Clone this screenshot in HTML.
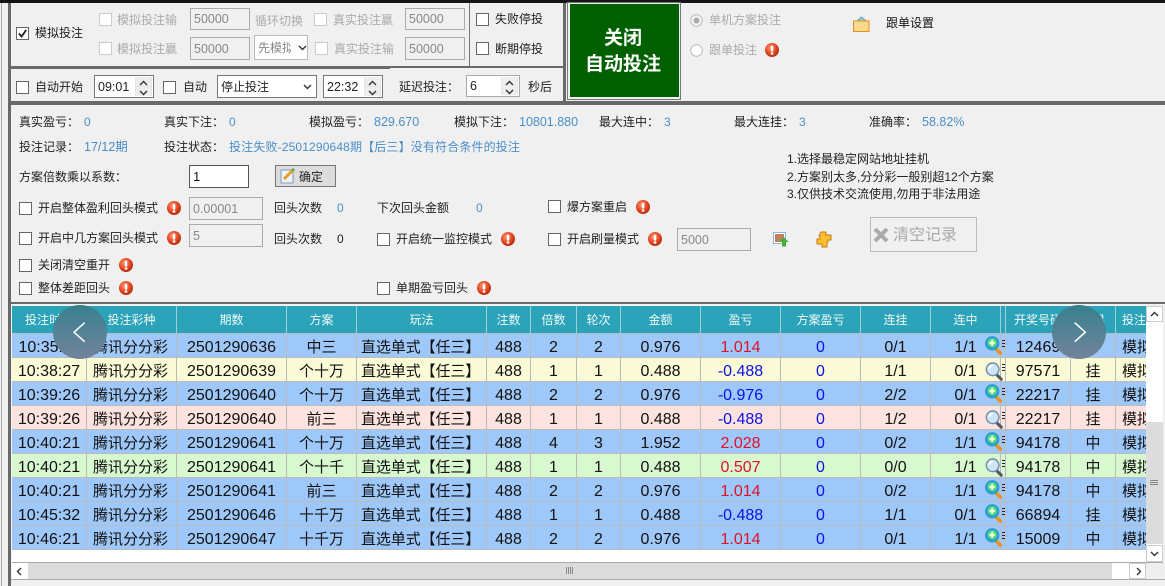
<!DOCTYPE html>
<html lang="zh"><head><meta charset="utf-8"><title>投注</title>
<style>
html,body{margin:0;padding:0}
body{width:1165px;height:586px;position:relative;overflow:hidden;background:#f0f0f0;font-family:"Liberation Sans","Noto Sans CJK SC",sans-serif;font-size:12px;color:#111}
.r{position:absolute}
.t{position:absolute;white-space:nowrap;line-height:16px;font-size:12px;color:#222}
.g{color:#aaa}.b{color:#4a8ec8}
.c{position:absolute;width:11px;height:11px;background:#fff;border:1px solid #666}
.d{border-color:#ccc}
.i{position:absolute;box-sizing:border-box;border:1px solid #aaa;background:#f0f0f0;color:#888;font-size:12.5px;padding-left:3px;display:flex;align-items:center}
.k{border:1px solid #777;background:#fff;color:#222}
.sp{position:absolute;top:1px;right:1px;width:17px;bottom:1px;background:#e4e4e4}
.sp i{position:absolute;left:1px;width:15px;height:9px;background:#eee;border:0 solid #ccc}
.sp svg{position:absolute;left:4px;top:2px}
table{position:absolute;left:12px;top:306px;border-collapse:separate;border-spacing:0;table-layout:fixed;width:1168px}
th{height:27px;background:#2ba3b8;font-weight:400;font-size:12px;border-right:1px solid #9fcfd8;border-bottom:1px solid #bbb;padding:0;white-space:nowrap;overflow:hidden;color:#f2fafa}
td{height:19px;padding:4px 0 0;border-right:1px solid #bbb;border-bottom:1px solid #bbb;text-align:center;font-size:15px;white-space:nowrap;overflow:visible;position:relative;color:#111;line-height:19px}
td.n{font-size:16px}
td.l{text-align:left;padding-left:6px}
td.f{text-align:left;padding-left:4px;font-size:15px;letter-spacing:-.1px}
tr.u td{background:#9fc8fa}tr.y td{background:#fbfad6}tr.p td{background:#fde3df}tr.v td{background:#d8f9cf}
.red{color:#e0102a!important}.blu{color:#0a10e8!important}
td svg{position:absolute;left:54px;top:2px;z-index:2;width:18px;height:20px}
td svg.s{top:4px}
.o{overflow:hidden!important}
td u{position:absolute;left:1px;top:6px;width:3px;height:9px;background:repeating-linear-gradient(#222 0 1px,transparent 1px 3px)}
.circ{position:absolute;top:305px;width:54px;height:54px;border-radius:50%;background:linear-gradient(#37808e,#72839b)}
</style></head><body>
<svg width="0" height="0" style="position:absolute"><defs>
<radialGradient id="rg" cx=".4" cy=".35" r=".7"><stop offset="0" stop-color="#fb9a74"/><stop offset=".6" stop-color="#e2431f"/><stop offset="1" stop-color="#a92c10"/></radialGradient>
<symbol id="w" viewBox="0 0 14 14"><circle cx="7" cy="7" r="7" fill="url(#rg)"/><rect x="5.8" y="2.6" width="2.5" height="6" rx="1" fill="#fff"/><rect x="5.8" y="9.4" width="2.5" height="2.2" fill="#fff"/></symbol>
<symbol id="pl" viewBox="0 0 20 22"><path d="M11 13l6 6" stroke="#e8961e" stroke-width="4" stroke-linecap="round"/><circle cx="8" cy="8" r="8" fill="#2a9fd0"/><circle cx="8" cy="7.500" r="5" fill="#62e070"/><path d="M8 4.500v6M5 7.500h6" stroke="#fff" stroke-width="2"/></symbol>
<symbol id="se" viewBox="0 0 20 22"><path d="M12 13l6 6" stroke="#556" stroke-width="3.4" stroke-linecap="round"/><circle cx="8.500" cy="8" r="7" fill="#cfe4f5" stroke="#6f8fb0" stroke-width="1.6"/><path d="M4.500 8a4 4 0 0 1 4-4" stroke="#fff" stroke-width="2" fill="none"/></symbol>
<symbol id="up" viewBox="0 0 9 6"><path d="M1 5l3.500-3.500L8 5" stroke="#333" stroke-width="1.4" fill="none"/></symbol>
<symbol id="dn" viewBox="0 0 9 6"><path d="M1 1l3.500 3.500L8 1" stroke="#333" stroke-width="1.4" fill="none"/></symbol>
</defs></svg>

<!-- frame -->
<div class="r" style="left:0;top:0;width:1165px;height:3px;background:#141414"></div>
<div class="r" style="left:1px;top:3px;width:1px;height:583px;background:#aaa"></div>
<div class="r" style="left:8px;top:3px;width:3px;height:583px;background:#696969"></div>
<div class="r" style="left:11px;top:66px;width:379px;height:3px;background:#696969"></div>
<div class="r" style="left:390px;top:66px;width:173px;height:2px;background:#696969"></div>
<div class="r" style="left:11px;top:101px;width:1154px;height:4px;background:#696969"></div>
<div class="r" style="left:469px;top:3px;width:1px;height:63px;background:#777"></div>
<div class="r" style="left:563px;top:3px;width:3px;height:98px;background:#696969"></div>
<div class="r" style="left:11px;top:302px;width:1154px;height:2px;background:#696969"></div>
<div class="r" style="left:12px;top:550px;width:1134px;height:12px;background:#fff"></div>

<!-- top row -->
<div class="c" style="left:16px;top:27px"><svg width="11" height="11" style="display:block"><path d="M2 5.500l2.600 3L9.200 2" stroke="#222" stroke-width="1.8" fill="none"/></svg></div>
<div class="t" style="left:35px;top:25px">模拟投注</div>
<div class="c d" style="left:99px;top:13px"></div><div class="t g" style="left:117px;top:12px">模拟投注输</div>
<div class="i" style="left:190px;top:8px;width:60px;height:22px">50000</div>
<div class="t g" style="left:255px;top:13px">循环切换</div>
<div class="c d" style="left:314px;top:13px"></div><div class="t g" style="left:333px;top:12px">真实投注赢</div>
<div class="i" style="left:405px;top:8px;width:60px;height:22px">50000</div>
<div class="c d" style="left:99px;top:42px"></div><div class="t g" style="left:117px;top:41px">模拟投注赢</div>
<div class="i" style="left:190px;top:37px;width:60px;height:23px">50000</div>
<div class="i" style="left:254px;top:35px;width:54px;height:25px;background:#fff;border-color:#bbb;overflow:hidden;font-size:12px;white-space:nowrap"><span style="width:33px;overflow:hidden;flex:none">先模拟后</span><svg width="9" height="6" style="margin-left:7px;flex:none"><use href="#dn"/></svg></div>
<div class="c d" style="left:315px;top:42px"></div><div class="t g" style="left:334px;top:41px">真实投注输</div>
<div class="i" style="left:405px;top:37px;width:60px;height:23px">50000</div>
<div class="c" style="left:476px;top:13px"></div><div class="t" style="left:495px;top:11px">失败停投</div>
<div class="c" style="left:476px;top:42px"></div><div class="t" style="left:495px;top:41px">断期停投</div>

<!-- second row -->
<div class="c" style="left:16px;top:81px"></div><div class="t" style="left:35px;top:79px">自动开始</div>
<div class="i k" style="left:94px;top:75px;width:60px;height:23px">09:01<div class="sp"><i style="top:0;height:9px"></i><i style="bottom:0;height:9px"></i><svg width="9" height="6" style="top:3px"><use href="#up"/></svg><svg width="9" height="6" style="top:13px"><use href="#dn"/></svg></div></div>
<div class="c" style="left:163px;top:81px"></div><div class="t" style="left:183px;top:79px">自动</div>
<div class="i k" style="left:217px;top:75px;width:100px;height:23px;font-size:12px">停止投注<svg width="9" height="6" style="position:absolute;left:85px;top:8px"><use href="#dn"/></svg></div>
<div class="i k" style="left:323px;top:75px;width:60px;height:23px">22:32<div class="sp"><i style="top:0;height:9px"></i><i style="bottom:0;height:9px"></i><svg width="9" height="6" style="top:3px"><use href="#up"/></svg><svg width="9" height="6" style="top:13px"><use href="#dn"/></svg></div></div>
<div class="t" style="left:399px;top:79px">延迟投注：</div>
<div class="i" style="left:466px;top:75px;width:54px;height:22px;background:#fff;border-color:#aaa;color:#222">6<div class="sp"><i style="top:0;height:9px"></i><i style="bottom:0;height:9px"></i><svg width="9" height="6" style="top:3px"><use href="#up"/></svg><svg width="9" height="6" style="top:12px"><use href="#dn"/></svg></div></div>
<div class="t" style="left:528px;top:79px">秒后</div>

<!-- green button -->
<div class="r" style="left:567px;top:2px;width:114px;height:98px;box-sizing:border-box;border:1px solid #777;background:#f0f0f0"></div>
<div class="r" style="left:570px;top:4px;width:109px;height:93px;background:#006000;color:#fff;font-size:19px;font-weight:700;line-height:26px;text-align:center;display:flex;align-items:center;justify-content:center"><div style="margin-top:3px;margin-left:-3px">关闭<br>自动投注</div></div>

<!-- right panel -->
<svg class="r" style="left:690px;top:14px" width="13" height="13"><circle cx="6.500" cy="6.500" r="5.800" fill="#f4f4f4" stroke="#bbb"/><circle cx="6.500" cy="6.500" r="3" fill="#aaa"/></svg>
<div class="t g" style="left:709px;top:12px">单机方案投注</div>
<svg class="r" style="left:690px;top:44px" width="13" height="13"><circle cx="6.500" cy="6.500" r="5.800" fill="#fff" stroke="#bbb"/></svg>
<div class="t g" style="left:709px;top:42px">跟单投注</div>
<svg class="r" style="left:765px;top:43px" width="14" height="14"><use href="#w"/></svg>
<svg class="r" style="left:853px;top:16px" width="17" height="16"><path d="M4 5l4.500-4 4.500 4z" fill="#8fd0e0" stroke="#79a"/><rect x=".5" y="5" width="15.500" height="10.500" fill="#fbd98a" stroke="#e09020"/></svg>
<div class="t" style="left:886px;top:15px;color:#111">跟单设置</div>

<!-- stats -->
<div class="t" style="left:19px;top:114px">真实盈亏：</div><div class="t b" style="left:84px;top:114px">0</div>
<div class="t" style="left:164px;top:114px">真实下注：</div><div class="t b" style="left:229px;top:114px">0</div>
<div class="t" style="left:309px;top:114px">模拟盈亏：</div><div class="t b" style="left:374px;top:114px;font-size:12.5px">829.670</div>
<div class="t" style="left:454px;top:114px">模拟下注：</div><div class="t b" style="left:519px;top:114px;font-size:12.5px">10801.880</div>
<div class="t" style="left:599px;top:114px">最大连中：</div><div class="t b" style="left:664px;top:114px">3</div>
<div class="t" style="left:734px;top:114px">最大连挂：</div><div class="t b" style="left:799px;top:114px">3</div>
<div class="t" style="left:869px;top:114px">准确率：</div><div class="t b" style="left:922px;top:114px;font-size:12.5px">58.82%</div>
<div class="t" style="left:19px;top:139px">投注记录：</div><div class="t b" style="left:84px;top:139px;font-size:12.500px">17/12期</div>
<div class="t" style="left:164px;top:139px">投注状态：</div><div class="t b" style="left:229px;top:139px;letter-spacing:.15px">投注失败-2501290648期【后三】没有符合条件的投注</div>
<div class="t" style="left:19px;top:169px">方案倍数乘以系数：</div>
<div class="i k" style="left:189px;top:165px;width:60px;height:23px;font-size:13px;color:#111;border-color:#555">1</div>
<div class="r" style="left:275px;top:165px;width:61px;height:22px;box-sizing:border-box;border:1px solid #777;background:#dcdcdc"></div>
<svg class="r" style="left:280px;top:168px" width="16" height="16"><rect x="1" y="2" width="12" height="13" fill="#eef2fa" stroke="#7f9cc8"/><path d="M4 11L13 2" stroke="#e8a020" stroke-width="3"/><path d="M12 3l2-2" stroke="#60b050" stroke-width="3"/></svg>
<div class="t" style="left:299px;top:169px">确定</div>

<div class="c" style="left:19px;top:202px"></div><div class="t" style="left:38px;top:200px">开启整体盈利回头模式</div>
<svg class="r" style="left:167px;top:201px" width="14" height="14"><use href="#w"/></svg>
<div class="i" style="left:189px;top:197px;width:74px;height:23px">0.00001</div>
<div class="t" style="left:274px;top:200px">回头次数</div><div class="t b" style="left:337px;top:200px">0</div>
<div class="t" style="left:377px;top:200px">下次回头金额</div><div class="t b" style="left:476px;top:200px">0</div>
<div class="c" style="left:548px;top:200px"></div><div class="t" style="left:567px;top:199px">爆方案重启</div>
<svg class="r" style="left:636px;top:200px" width="14" height="14"><use href="#w"/></svg>

<div class="c" style="left:19px;top:232px"></div><div class="t" style="left:38px;top:230px">开启中几方案回头模式</div>
<svg class="r" style="left:167px;top:231px" width="14" height="14"><use href="#w"/></svg>
<div class="i" style="left:189px;top:224px;width:74px;height:23px">5</div>
<div class="t" style="left:274px;top:231px">回头次数</div><div class="t" style="left:337px;top:231px">0</div>
<div class="c" style="left:377px;top:233px"></div><div class="t" style="left:396px;top:231px">开启统一监控模式</div>
<svg class="r" style="left:501px;top:232px" width="14" height="14"><use href="#w"/></svg>
<div class="c" style="left:548px;top:233px"></div><div class="t" style="left:567px;top:231px">开启刷量模式</div>
<svg class="r" style="left:648px;top:232px" width="14" height="14"><use href="#w"/></svg>
<div class="i" style="left:677px;top:228px;width:74px;height:23px">5000</div>
<svg class="r" style="left:773px;top:232px" width="16" height="16"><rect x=".5" y=".5" width="12" height="11" fill="#fff" stroke="#8ab4e8"/><rect x="2" y="2" width="9" height="8" fill="#c08060"/><path d="M11 5l4.500 5H13v4.500H9V10H6.500z" fill="#44b030"/></svg>
<svg class="r" style="left:815px;top:231px" width="17" height="17"><path d="M6 1h5v3h5v5h-3v2h-1v5H7v-3H2V8h3V5H4z" fill="#f8c030" stroke="#cc7a10"/></svg>
<div class="r" style="left:870px;top:217px;width:107px;height:35px;box-sizing:border-box;border:1px solid #bbb;background:#f0f0f0"></div>
<svg class="r" style="left:873px;top:227px" width="16" height="16"><path d="M2 2l12 12M14 2L2 14" stroke="#aaa" stroke-width="4"/></svg>
<div class="t" style="left:893px;top:226px;font-size:16px;line-height:20px;color:#aaa">清空记录</div>

<div class="c" style="left:19px;top:259px"></div><div class="t" style="left:38px;top:257px">关闭清空重开</div>
<svg class="r" style="left:119px;top:258px" width="14" height="14"><use href="#w"/></svg>
<div class="c" style="left:19px;top:282px"></div><div class="t" style="left:38px;top:280px">整体差距回头</div>
<svg class="r" style="left:119px;top:281px" width="14" height="14"><use href="#w"/></svg>
<div class="c" style="left:377px;top:282px"></div><div class="t" style="left:396px;top:280px">单期盈亏回头</div>
<svg class="r" style="left:477px;top:281px" width="14" height="14"><use href="#w"/></svg>

<div class="t" style="left:787px;top:151px">1.选择最稳定网站地址挂机</div>
<div class="t" style="left:787px;top:169px">2.方案别太多,分分彩一般别超12个方案</div>
<div class="t" style="left:787px;top:186px">3.仅供技术交流使用,勿用于非法用途</div>

<!-- table -->
<div class="r" style="left:0;top:0;width:1146px;height:586px;overflow:hidden;pointer-events:none">
<table>
<colgroup><col style="width:75px"><col style="width:90px"><col style="width:110px"><col style="width:70px"><col style="width:130px"><col style="width:44px"><col style="width:46px"><col style="width:44px"><col style="width:80px"><col style="width:80px"><col style="width:80px"><col style="width:70px"><col style="width:70px"><col style="width:5px"><col style="width:65px"><col style="width:45px"><col style="width:64px"></colgroup>
<tr><th>投注时间</th><th>投注彩种</th><th>期数</th><th>方案</th><th>玩法</th><th>注数</th><th>倍数</th><th>轮次</th><th>金额</th><th>盈亏</th><th>方案盈亏</th><th>连挂</th><th>连中</th><th></th><th>开奖号码</th><th>结果</th><th style="text-align:left;padding-left:6px">投注</th></tr>
<tr class="u"><td class="n">10:35:11</td><td class="l">腾讯分分彩</td><td class="n">2501290636</td><td>中三</td><td class="f">直选单式【任三】</td><td class="n">488</td><td class="n">2</td><td class="n">2</td><td class="n">0.976</td><td class="n red">1.014</td><td class="n blu">0</td><td class="n">0/1</td><td class="n">1/1<svg><use href="#pl"/></svg></td><td><u></u></td><td class="n">12469</td><td>中</td><td class="l o">模拟投注</td></tr>
<tr class="y"><td class="n">10:38:27</td><td class="l">腾讯分分彩</td><td class="n">2501290639</td><td>个十万</td><td class="f">直选单式【任三】</td><td class="n">488</td><td class="n">1</td><td class="n">1</td><td class="n">0.488</td><td class="n blu">-0.488</td><td class="n blu">0</td><td class="n">1/1</td><td class="n">0/1<svg class="s"><use href="#se"/></svg></td><td><u></u></td><td class="n">97571</td><td>挂</td><td class="l o">模拟投注</td></tr>
<tr class="u"><td class="n">10:39:26</td><td class="l">腾讯分分彩</td><td class="n">2501290640</td><td>个十万</td><td class="f">直选单式【任三】</td><td class="n">488</td><td class="n">2</td><td class="n">2</td><td class="n">0.976</td><td class="n blu">-0.976</td><td class="n blu">0</td><td class="n">2/2</td><td class="n">0/1<svg><use href="#pl"/></svg></td><td><u></u></td><td class="n">22217</td><td>挂</td><td class="l o">模拟投注</td></tr>
<tr class="p"><td class="n">10:39:26</td><td class="l">腾讯分分彩</td><td class="n">2501290640</td><td>前三</td><td class="f">直选单式【任三】</td><td class="n">488</td><td class="n">1</td><td class="n">1</td><td class="n">0.488</td><td class="n blu">-0.488</td><td class="n blu">0</td><td class="n">1/2</td><td class="n">0/1<svg class="s"><use href="#se"/></svg></td><td><u></u></td><td class="n">22217</td><td>挂</td><td class="l o">模拟投注</td></tr>
<tr class="u"><td class="n">10:40:21</td><td class="l">腾讯分分彩</td><td class="n">2501290641</td><td>个十万</td><td class="f">直选单式【任三】</td><td class="n">488</td><td class="n">4</td><td class="n">3</td><td class="n">1.952</td><td class="n red">2.028</td><td class="n blu">0</td><td class="n">0/2</td><td class="n">1/1<svg><use href="#pl"/></svg></td><td><u></u></td><td class="n">94178</td><td>中</td><td class="l o">模拟投注</td></tr>
<tr class="v"><td class="n">10:40:21</td><td class="l">腾讯分分彩</td><td class="n">2501290641</td><td>个十千</td><td class="f">直选单式【任三】</td><td class="n">488</td><td class="n">1</td><td class="n">1</td><td class="n">0.488</td><td class="n red">0.507</td><td class="n blu">0</td><td class="n">0/0</td><td class="n">1/1<svg class="s"><use href="#se"/></svg></td><td><u></u></td><td class="n">94178</td><td>中</td><td class="l o">模拟投注</td></tr>
<tr class="u"><td class="n">10:40:21</td><td class="l">腾讯分分彩</td><td class="n">2501290641</td><td>前三</td><td class="f">直选单式【任三】</td><td class="n">488</td><td class="n">2</td><td class="n">2</td><td class="n">0.976</td><td class="n red">1.014</td><td class="n blu">0</td><td class="n">0/2</td><td class="n">1/1<svg><use href="#pl"/></svg></td><td><u></u></td><td class="n">94178</td><td>中</td><td class="l o">模拟投注</td></tr>
<tr class="u"><td class="n">10:45:32</td><td class="l">腾讯分分彩</td><td class="n">2501290646</td><td>十千万</td><td class="f">直选单式【任三】</td><td class="n">488</td><td class="n">1</td><td class="n">1</td><td class="n">0.488</td><td class="n blu">-0.488</td><td class="n blu">0</td><td class="n">1/1</td><td class="n">0/1<svg><use href="#pl"/></svg></td><td><u></u></td><td class="n">66894</td><td>挂</td><td class="l o">模拟投注</td></tr>
<tr class="u"><td class="n">10:46:21</td><td class="l">腾讯分分彩</td><td class="n">2501290647</td><td>十千万</td><td class="f">直选单式【任三】</td><td class="n">488</td><td class="n">2</td><td class="n">2</td><td class="n">0.976</td><td class="n red">1.014</td><td class="n blu">0</td><td class="n">0/1</td><td class="n">1/1<svg><use href="#pl"/></svg></td><td><u></u></td><td class="n">15009</td><td>中</td><td class="l o">模拟投注</td></tr>
</table>
</div>

<!-- vertical scrollbar -->
<div class="r" style="left:1146px;top:306px;width:17px;height:256px;background:#fff"></div>
<div class="r" style="left:1146px;top:306px;width:17px;height:16px;box-sizing:border-box;border:1px solid #ccc;background:#fff"><svg width="9" height="6" style="position:absolute;left:3px;top:4px"><use href="#up"/></svg></div>
<div class="r" style="left:1146px;top:422px;width:17px;height:122px;background:#dcdcdc"><div class="r" style="left:4px;top:58px;width:8px;height:6px;background:repeating-linear-gradient(#888 0 1px,transparent 1px 2px)"></div></div>
<div class="r" style="left:1146px;top:545px;width:17px;height:17px;box-sizing:border-box;border:1px solid #ccc;background:#fff"><svg width="9" height="6" style="position:absolute;left:3px;top:5px"><use href="#dn"/></svg></div>
<!-- horizontal scrollbar -->
<div class="r" style="left:12px;top:562px;width:1151px;height:1px;background:#aaa"></div>
<div class="r" style="left:12px;top:563px;width:1134px;height:16px;background:#fff"></div>
<svg class="r" style="left:16px;top:567px" width="7" height="9"><path d="M5 1L1.500 4.500 5 8" stroke="#333" stroke-width="1.4" fill="none"/></svg>
<div class="r" style="left:28px;top:563px;width:1084px;height:16px;background:#dcdcdc"></div>
<div class="r" style="left:566px;top:567px;width:7px;height:7px;background:repeating-linear-gradient(90deg,#888 0 1px,transparent 1px 2px)"></div>
<div class="r" style="left:1129px;top:563px;width:17px;height:16px;box-sizing:border-box;border:1px solid #ccc;background:#fff"><svg width="7" height="9" style="position:absolute;left:5px;top:3px"><path d="M2 1l3.500 3.500L2 8" stroke="#333" stroke-width="1.4" fill="none"/></svg></div>
<div class="r" style="left:1146px;top:563px;width:17px;height:16px;background:#eee"></div>
<div class="r" style="left:11px;top:579px;width:1154px;height:1px;background:#aaa"></div>
<div class="r" style="left:11px;top:580px;width:1154px;height:6px;background:#f0f0f0"></div>

<!-- carousel arrows -->
<div class="circ" style="left:53px"><svg width="54" height="54"><path d="M31.700 17.700L21 27.200l10.700 9.500" stroke="#fff" stroke-width="1.6" fill="none"/></svg></div>
<div class="circ" style="left:1052px"><svg width="54" height="54"><path d="M22.700 17.700L33.300 27.200 22.700 36.700" stroke="#fff" stroke-width="1.6" fill="none"/></svg></div>
</body></html>
